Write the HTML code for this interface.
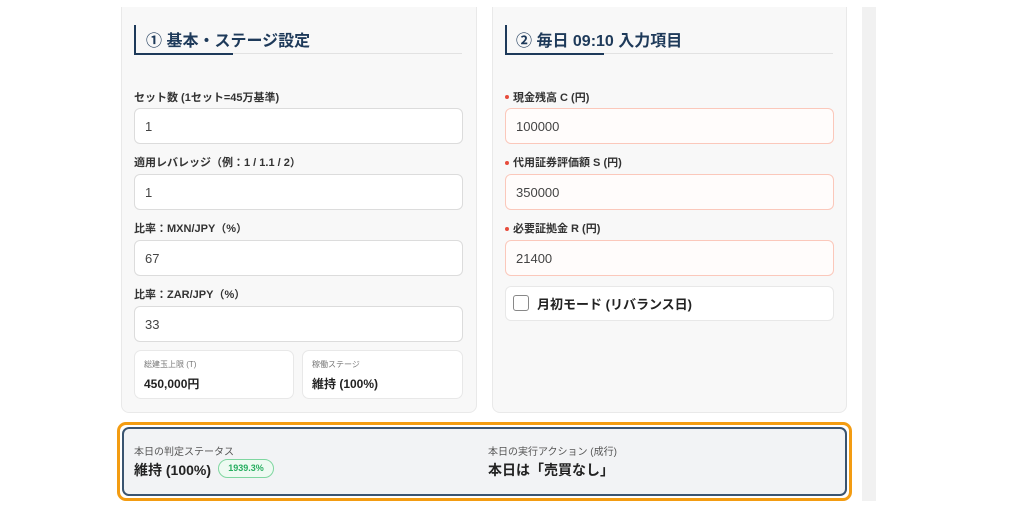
<!DOCTYPE html>
<html><head><meta charset="utf-8"><style>
*{box-sizing:border-box;margin:0;padding:0}
body{width:1024px;height:512px;background:#fff;position:relative;overflow:hidden;font-family:"Liberation Sans","Noto Sans CJK JP",sans-serif;color:#333}
.abs{position:absolute}
.strip{left:862px;top:7px;width:14px;height:494px;background:#f1f1f1}
.card{top:-10px;height:423px;background:#f8f8f8;border:1px solid #e9e9e9;border-radius:8px}
.h{font-size:16px;font-weight:bold;color:#1e3a5a;top:27px}
.bar{width:2px;height:30px;background:#1e3a5a;top:25px}
.ul{height:2px;background:#1e3a5a;top:53px}
.ll{height:1px;background:#e2e2e2;top:53px}
.lab{font-size:11px;font-weight:bold;color:#333}
.inp{height:36px;background:#fff;border:1px solid #dcdcdc;border-radius:6px;font-size:13px;color:#444;padding:10px 10px;line-height:16px}
.inp.r{background:#fffcfb;border-color:#fbc8bb}
.dot{width:4px;height:4px;border-radius:50%;background:#e74c3c}
.mini{height:49px;background:#fff;border:1px solid #e8e8e8;border-radius:7px;padding:8px 9px}
.mini .s{font-size:8px;color:#777;line-height:12px}
.mini .v{font-size:12px;font-weight:bold;color:#222;margin-top:4px}
</style></head><body>
<div class="abs strip"></div>
<div class="abs card" style="left:121px;width:356px"></div>
<div class="abs card" style="left:492px;width:355px"></div>
<div class="abs" style="left:0;top:0;width:1024px;height:7px;background:#fff"></div>

<div class="abs bar" style="left:134px"></div>
<div class="abs ul" style="left:134px;width:99px"></div>
<div class="abs ll" style="left:233px;width:229px"></div>
<div class="abs h" style="left:146px">① 基本・ステージ設定</div>

<div class="abs bar" style="left:505px"></div>
<div class="abs ul" style="left:505px;width:99px"></div>
<div class="abs ll" style="left:604px;width:229px"></div>
<div class="abs h" style="left:516px">② 毎日 09:10 入力項目</div>

<div class="abs lab" style="left:134px;top:89px">セット数 (1セット=45万基準)</div>
<div class="abs inp" style="left:134px;top:108px;width:329px">1</div>
<div class="abs lab" style="left:134px;top:154px">適用レバレッジ（例：1 / 1.1 / 2）</div>
<div class="abs inp" style="left:134px;top:174px;width:329px">1</div>
<div class="abs lab" style="left:134px;top:220px">比率：MXN/JPY（%）</div>
<div class="abs inp" style="left:134px;top:240px;width:329px">67</div>
<div class="abs lab" style="left:134px;top:286px">比率：ZAR/JPY（%）</div>
<div class="abs inp" style="left:134px;top:306px;width:329px">33</div>
<div class="abs mini" style="left:134px;top:350px;width:160px"><div class="s">総建玉上限 (T)</div><div class="v">450,000円</div></div>
<div class="abs mini" style="left:302px;top:350px;width:161px"><div class="s">稼働ステージ</div><div class="v">維持 (100%)</div></div>

<div class="abs dot" style="left:505px;top:95px"></div>
<div class="abs lab" style="left:513px;top:89px">現金残高 C (円)</div>
<div class="abs inp r" style="left:505px;top:108px;width:329px">100000</div>
<div class="abs dot" style="left:505px;top:161px"></div>
<div class="abs lab" style="left:513px;top:154px">代用証券評価額 S (円)</div>
<div class="abs inp r" style="left:505px;top:174px;width:329px">350000</div>
<div class="abs dot" style="left:505px;top:227px"></div>
<div class="abs lab" style="left:513px;top:220px">必要証拠金 R (円)</div>
<div class="abs inp r" style="left:505px;top:240px;width:329px">21400</div>
<div class="abs" style="left:505px;top:286px;width:329px;height:35px;background:#fff;border:1px solid #e8e8e8;border-radius:6px"></div>
<div class="abs" style="left:513px;top:295px;width:16px;height:16px;border:1.5px solid #888;border-radius:3px;background:#fff"></div>
<div class="abs" style="left:537px;top:294px;font-size:13px;font-weight:bold;color:#222">月初モード (リバランス日)</div>

<div class="abs" style="left:117px;top:422px;width:735px;height:79px;border:3px solid #f39c12;border-radius:9px;background:#fff"></div>
<div class="abs" style="left:122px;top:427px;width:725px;height:69px;border:2px solid #3a5470;border-radius:7px;background:#f2f3f5"></div>
<div class="abs" style="left:134px;top:443px;font-size:10px;color:#555">本日の判定ステータス</div>
<div class="abs" style="left:134px;top:460px;font-size:14px;font-weight:bold;color:#222">維持 (100%)</div>
<div class="abs" style="left:218px;top:459px;width:56px;height:19px;border:1px solid #7fd6a0;border-radius:10px;background:#eefaf2;color:#27ae60;font-size:9px;font-weight:bold;text-align:center;line-height:17px">1939.3%</div>
<div class="abs" style="left:488px;top:443px;font-size:10px;color:#555">本日の実行アクション (成行)</div>
<div class="abs" style="left:488px;top:460px;font-size:14px;font-weight:bold;color:#222">本日は「売買なし」</div>
</body></html>
